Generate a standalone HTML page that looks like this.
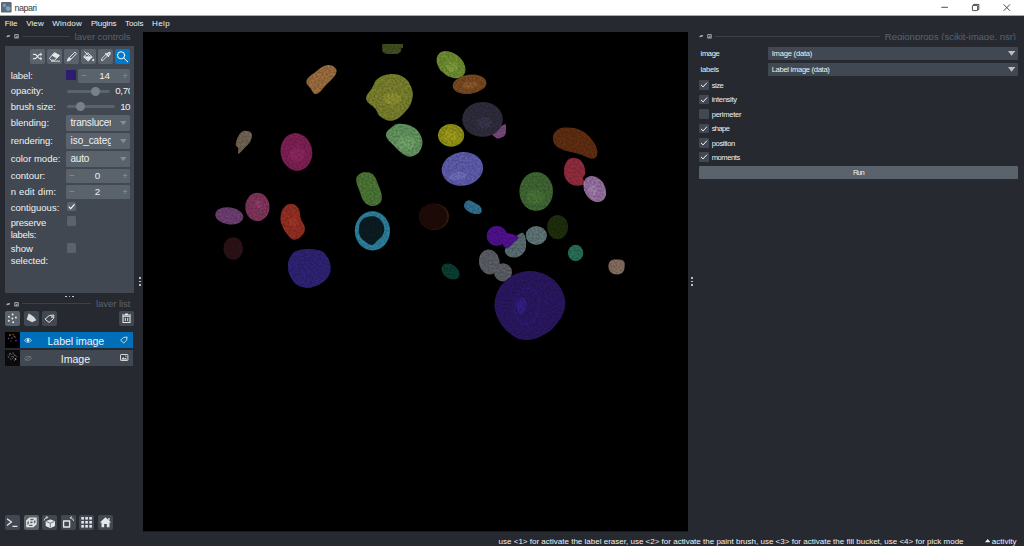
<!DOCTYPE html>
<html>
<head>
<meta charset="utf-8">
<title>napari</title>
<style>
html,body{margin:0;padding:0;}
body{width:1024px;height:546px;overflow:hidden;background:#262930;font-family:"Liberation Sans",sans-serif;color:#f0f1f2;}
#app{position:relative;width:1024px;height:546px;overflow:hidden;background:#262930;}
#app div,#app span,#app svg{position:absolute;}
.t{white-space:pre;line-height:12px;color:#f0f1f2;}
.box{background:#414851;}
.btn{background:#414851;border-radius:2px;}
.fld{background:#5a626c;border-radius:1.5px;}
.clip{overflow:hidden;}
</style>
</head>
<body>
<div id="app">
<div class="box" style="left:0px;top:0px;width:1024px;height:15px;background:#ffffff;"></div>
<div class="box" style="left:0px;top:15px;width:1024px;height:1px;background:#a9aaad;"></div>
<svg style="left:1px;top:2px" width="11" height="11" viewBox="0 0 11 11"><rect width="10.600" height="10.600" rx="1.2" fill="#5d6975"/><circle cx="3.400" cy="3.400" r="1.800" fill="#6c9cc0"/><circle cx="7" cy="6.600" r="2.400" fill="#7aa6c4"/><circle cx="4.200" cy="7.600" r="1.300" fill="#54788c"/><circle cx="8" cy="2.600" r="1" fill="#8a5a8a"/><circle cx="2" cy="6" r="0.600" fill="#a0508c"/><circle cx="8.800" cy="8.800" r="0.600" fill="#5aa04a"/></svg>
<span class="t" style="left:14.50px;top:1.98px;font-size:9px;letter-spacing:-0.522px;color:#3c3c3c;">napari</span>
<svg style="left:936px;top:0px" width="88" height="15" viewBox="0 0 88 15" fill="none" stroke="#222" stroke-width="0.8"><path d="M5.3 7.3h6.6"/><rect x="36.4" y="5.4" width="5.2" height="5.2" rx="0.6"/><path d="M37.6 5.4v-1h5.2v5.2h-1.2"/><path d="M67.6 4.4l6.4 6.4M74 4.4l-6.4 6.4"/></svg>
<span class="t" style="left:4.70px;top:18.03px;font-size:8px;letter-spacing:-0.023px;">File</span>
<span class="t" style="left:26.25px;top:18.03px;font-size:8px;letter-spacing:0.074px;">View</span>
<span class="t" style="left:52.30px;top:18.03px;font-size:8px;letter-spacing:0.208px;">Window</span>
<span class="t" style="left:90.90px;top:18.03px;font-size:8px;letter-spacing:-0.107px;">Plugins</span>
<span class="t" style="left:125.00px;top:18.03px;font-size:8px;letter-spacing:-0.058px;">Tools</span>
<span class="t" style="left:152.00px;top:18.03px;font-size:8px;letter-spacing:0.387px;">Help</span>
<div class="box" style="left:143px;top:32px;width:545px;height:499px;background:#000000;"></div>
<div class="box" style="left:143px;top:531px;width:545px;height:1px;background:#17191d;"></div>
<svg style="left:143px;top:32px" width="545" height="500" viewBox="143 32 545 500"><defs><filter id="tx" x="0" y="0" width="100%" height="100%" color-interpolation-filters="sRGB"><feTurbulence type="fractalNoise" baseFrequency="0.5" numOctaves="2" seed="7"/><feColorMatrix type="matrix" values="3 0 0 0 -1  3 0 0 0 -1  3 0 0 0 -1  0 0 0 0 1" result="ng"/><feComposite in="SourceGraphic" in2="ng" operator="arithmetic" k1="0.22" k2="0.86" k3="0" k4="0"/></filter></defs><g filter="url(#tx)"><path d="M382.2 44H403V47.6C403 48.2 401.2 48 401.2 49V50.8C401.2 52 398.500 53.900 396.800 53.900H387C385 53.900 382.200 52 382.200 50.500Z" fill="#3d4b1e"/><path d="M306.6 80.5C307.7 77.0 311.9 74.7 316.0 71.5C320.1 68.3 322.6 66.0 326.5 65.2C330.4 64.4 332.9 65.5 334.8 67.4C336.7 69.3 337.4 70.9 335.6 74.5C333.8 78.1 329.9 81.0 326.0 85.0C322.1 89.0 319.8 93.3 316.6 94.0C313.4 94.7 312.6 91.3 310.5 88.5C308.4 85.7 305.5 84.0 306.6 80.5Z" fill="#94683c"/><path d="M366.2 99.0C365.6 94.8 369.6 92.2 372.0 88.0C374.4 83.8 374.1 81.4 378.0 78.5C381.9 75.6 385.6 74.2 391.0 74.0C396.4 73.8 399.8 74.6 404.0 77.5C408.2 80.4 409.8 83.3 411.5 88.0C413.2 92.7 413.3 95.0 412.0 100.0C410.7 105.0 408.9 107.8 405.0 112.0C401.1 116.2 398.0 119.5 393.0 120.5C388.0 121.5 384.7 119.5 381.0 117.0C377.3 114.5 378.1 112.2 375.0 108.5C371.9 104.8 366.8 103.2 366.2 99.0Z" fill="#747a2a"/><ellipse cx="392" cy="99" rx="9" ry="6" fill="#878a2e"/><ellipse cx="451" cy="64.7" rx="16.3" ry="11.3" fill="#69872f" transform="rotate(40 451 64.7)"/><ellipse cx="452" cy="67" rx="6" ry="5" fill="#7a9636"/><ellipse cx="469.6" cy="84.3" rx="17" ry="9.6" fill="#72451f" transform="rotate(-8 469.6 84.3)"/><ellipse cx="470" cy="85" rx="8" ry="3.5" fill="#855328" transform="rotate(-8 470 85)"/><path d="M498.1 138.7C496.8 138.6 491.7 135.5 492.4 134.0C493.1 132.5 503.9 123.8 505.2 123.9C506.5 124.0 506.1 133.3 505.4 134.8C504.7 136.3 499.4 138.8 498.1 138.7Z" fill="#724678"/><ellipse cx="482.5" cy="119.4" rx="20.3" ry="17.4" fill="#2c2a39"/><ellipse cx="484" cy="123" rx="8" ry="6" fill="#323146"/><ellipse cx="451.1" cy="135.3" rx="13.1" ry="11.4" fill="#8b8b16"/><ellipse cx="451" cy="135.5" rx="7" ry="6" fill="#97951a"/><ellipse cx="462.4" cy="168.9" rx="20.8" ry="16.8" fill="#5b58a5" transform="rotate(-8 462.4 168.9)"/><ellipse cx="458" cy="176" rx="9" ry="4" fill="#6967af" transform="rotate(-8 458 176)"/><path d="M553.1 140.3C552.4 136.6 553.4 133.1 556.5 130.5C559.6 127.9 562.7 127.5 568.0 127.6C573.3 127.7 576.9 128.3 582.0 131.0C587.1 133.7 589.3 136.3 592.5 140.5C595.7 144.7 597.2 147.8 597.3 151.5C597.4 155.2 597.0 158.0 593.0 158.5C589.0 159.0 584.8 155.9 578.0 153.8C571.2 151.7 565.1 151.3 560.0 148.5C554.9 145.7 553.8 144.0 553.1 140.3Z" fill="#5b2b10"/><path d="M564.0 171.0C564.1 167.1 564.8 163.7 567.0 161.0C569.2 158.3 571.4 157.7 574.5 157.9C577.6 158.1 579.8 159.1 582.0 162.0C584.2 164.9 585.1 168.5 585.3 172.0C585.5 175.5 582.6 176.7 583.0 179.0C583.4 181.3 587.6 181.7 587.0 183.0C586.4 184.3 582.9 185.0 580.0 185.4C577.1 185.8 575.8 186.1 573.0 185.0C570.2 183.9 568.4 182.9 566.5 180.0C564.6 177.1 563.9 174.9 564.0 171.0Z" fill="#8b2a3a"/><ellipse cx="594.8" cy="189" rx="10.3" ry="14" fill="#8f6b99" transform="rotate(-32 594.8 189)"/><ellipse cx="593" cy="190" rx="4" ry="5" fill="#9b79a5" transform="rotate(-32 593 190)"/><ellipse cx="536.2" cy="191.5" rx="16.8" ry="19.5" fill="#3c6130"/><ellipse cx="535" cy="197" rx="9" ry="7" fill="#456d34"/><path d="M386.1 135.8C385.5 131.8 388.7 129.7 391.6 127.2C394.5 124.7 395.7 123.7 400.2 123.7C404.7 123.7 409.1 124.5 413.4 127.2C417.7 129.9 419.5 132.4 421.2 136.6C422.9 140.8 422.9 143.6 421.6 147.5C420.3 151.4 418.3 153.6 415.0 155.3C411.7 157.0 409.8 157.3 405.6 155.5C401.4 153.7 398.7 150.6 394.7 146.5C390.7 142.4 386.7 139.8 386.1 135.8Z" fill="#5e8e5a"/><ellipse cx="406" cy="143" rx="9" ry="7" fill="#6a9a64"/><path d="M241.5 132.0C244.6 129.7 248.9 130.7 250.8 132.5C252.7 134.3 252.1 137.3 250.8 140.5C249.5 143.7 247.0 145.3 244.5 148.0C242.0 150.7 239.8 153.7 238.5 153.7C237.2 153.7 238.8 150.1 238.2 148.0C237.6 145.9 235.1 146.7 235.8 143.4C236.5 140.1 238.4 134.3 241.5 132.0Z" fill="#6d5f50"/><ellipse cx="296.4" cy="151.9" rx="15.8" ry="18.9" fill="#791e50" transform="rotate(-10 296.4 151.9)"/><ellipse cx="297" cy="155" rx="8" ry="7" fill="#852459" transform="rotate(-10 297 155)"/><path d="M356.2 180.3C356.1 176.9 357.1 176.2 359.0 174.5C360.9 172.8 362.4 172.2 365.3 172.2C368.2 172.2 370.4 172.1 373.0 174.5C375.6 176.9 376.2 179.6 378.0 184.0C379.8 188.4 381.5 192.0 381.8 196.0C382.1 200.0 381.6 201.5 379.5 203.5C377.4 205.5 374.8 206.3 371.6 205.9C368.4 205.5 366.5 204.6 364.0 201.5C361.5 198.4 361.1 195.4 359.5 191.0C357.9 186.6 356.3 183.7 356.2 180.3Z" fill="#487132"/><ellipse cx="229.3" cy="215.9" rx="14.1" ry="8.5" fill="#693c6d" transform="rotate(8 229.3 215.9)"/><ellipse cx="257.4" cy="207" rx="12.1" ry="14.2" fill="#793257"/><ellipse cx="259" cy="204" rx="4" ry="4" fill="#893863"/><path d="M280.5 217.5C280.8 214.0 281.2 210.8 283.5 208.0C285.8 205.2 288.3 203.7 291.4 203.8C294.5 203.9 296.5 205.4 298.5 208.5C300.5 211.6 299.7 215.1 301.0 219.0C302.3 222.9 304.5 224.2 304.8 227.5C305.1 230.8 304.7 232.5 302.5 235.0C300.3 237.5 297.3 240.0 294.0 239.7C290.7 239.4 289.0 236.5 286.5 233.5C284.0 230.5 283.2 228.3 282.0 225.0C280.8 221.7 280.2 221.0 280.5 217.5Z" fill="#8d2c20"/><ellipse cx="293" cy="222" rx="4.5" ry="4.5" fill="#9b3328"/><ellipse cx="233.2" cy="248.5" rx="9.8" ry="11.2" fill="#2a1116"/><path d="M288.0 268.0C287.7 263.2 288.2 260.2 290.5 256.5C292.8 252.8 293.3 251.5 299.0 250.2C304.7 248.9 312.2 248.7 318.0 250.0C323.8 251.3 324.4 252.7 327.0 256.5C329.6 260.3 330.8 263.7 330.6 268.5C330.4 273.3 329.6 275.7 326.0 279.5C322.4 283.3 318.3 285.6 313.0 287.0C307.7 288.4 304.8 288.1 300.5 286.5C296.2 284.9 294.6 283.3 292.0 279.5C289.4 275.7 288.3 272.8 288.0 268.0Z" fill="#2b216f"/><ellipse cx="372.4" cy="230.8" rx="17.6" ry="19.6" fill="#2a7b97"/><path d="M358.9 229.0C359.2 225.8 359.3 223.1 361.5 220.5C363.7 217.9 366.1 217.1 369.5 216.6C372.9 216.1 375.0 216.1 378.0 218.0C381.0 219.9 382.9 222.6 383.9 226.0C384.9 229.4 384.3 231.5 383.0 234.5C381.7 237.5 379.8 238.4 377.5 240.5C375.2 242.6 374.4 244.8 371.7 244.9C369.0 245.0 366.9 242.8 364.5 241.0C362.1 239.2 361.2 238.5 360.0 236.0C358.8 233.5 358.6 232.2 358.9 229.0Z" fill="#0a1b20"/><ellipse cx="434" cy="216.7" rx="15" ry="13.3" fill="#3a1a0c"/><ellipse cx="433.2" cy="216.7" rx="14" ry="12.9" fill="#1c0a07"/><path d="M464.2 204.5C464.6 202.6 466.0 200.8 468.0 200.4C470.0 200.0 471.4 201.1 474.0 202.5C476.6 203.9 479.2 204.8 480.6 207.0C482.0 209.2 482.4 211.7 480.8 213.0C479.2 214.3 476.1 214.1 473.0 213.4C469.9 212.7 467.8 211.3 466.0 209.5C464.2 207.7 463.8 206.4 464.2 204.5Z" fill="#2e6b89"/><path d="M504.8 250.5C505.1 248.4 507.1 245.4 509.0 243.0C510.9 240.6 514.2 237.7 516.5 236.0C518.8 234.3 521.5 232.3 523.0 233.0C524.5 233.7 525.4 237.2 525.8 240.0C526.2 242.8 526.5 246.8 525.5 249.5C524.5 252.2 522.1 254.7 520.0 256.0C517.9 257.3 515.1 257.6 513.0 257.5C510.9 257.4 508.9 256.7 507.5 255.5C506.1 254.3 504.6 252.6 504.8 250.5Z" fill="#56686b"/><ellipse cx="496.9" cy="235.9" rx="10.3" ry="10.1" fill="#4b1086"/><path d="M502.3 233.6C503.0 232.0 506.4 233.1 508.0 233.2C509.6 233.3 512.5 234.1 514.0 234.7C515.5 235.3 519.1 236.4 519.0 237.5C518.9 238.6 515.0 241.6 513.5 243.0C512.0 244.4 509.2 248.0 507.8 248.3C506.4 248.6 503.8 247.2 503.1 245.2C502.4 243.2 501.6 235.2 502.3 233.6Z" fill="#4e108c"/><ellipse cx="536.3" cy="235.4" rx="10.6" ry="9.5" fill="#5b6f71"/><ellipse cx="557.6" cy="227.1" rx="10.5" ry="12.1" fill="#1d2b0c"/><ellipse cx="575.6" cy="253" rx="7.7" ry="8.3" fill="#276953"/><path d="M608.5 267.0C608.4 264.6 608.7 262.5 610.5 261.0C612.3 259.5 614.3 259.6 617.0 259.6C619.7 259.6 621.9 259.5 623.5 261.0C625.1 262.5 624.8 264.6 624.6 267.0C624.4 269.4 624.1 271.0 622.5 272.5C620.9 274.0 619.4 274.4 617.0 274.4C614.6 274.4 612.8 274.0 611.0 272.5C609.2 271.0 608.6 269.4 608.5 267.0Z" fill="#7f695b"/><ellipse cx="489.3" cy="262" rx="10.4" ry="12.5" fill="#565a60" transform="rotate(-12 489.3 262)"/><ellipse cx="503" cy="272.3" rx="9" ry="9.1" fill="#575b61"/><ellipse cx="450.5" cy="271.5" rx="10" ry="7" fill="#0a3a30" transform="rotate(35 450.5 271.5)"/><path d="M565.3 306.1C565.0 309.0 563.7 312.0 562.5 314.7C561.4 317.4 559.9 319.9 558.2 322.1C556.6 324.4 554.7 326.5 552.7 328.4C550.7 330.3 548.5 332.0 546.1 333.5C543.7 335.0 541.2 336.3 538.5 337.4C535.8 338.4 532.9 339.4 530.0 339.7C527.1 340.1 523.8 340.3 520.9 339.6C518.0 338.9 515.2 337.2 512.7 335.5C510.2 333.9 507.9 332.0 505.8 329.9C503.8 327.8 501.9 325.5 500.3 323.0C498.8 320.5 497.4 317.8 496.4 314.9C495.5 312.1 494.6 309.1 494.4 306.1C494.3 303.1 494.8 299.9 495.5 297.0C496.3 294.1 497.6 291.2 499.1 288.5C500.6 285.9 502.6 283.4 504.8 281.3C506.9 279.1 509.5 277.2 512.2 275.7C514.8 274.2 517.8 273.0 520.8 272.2C523.7 271.4 526.9 271.0 530.0 271.0C533.1 271.0 536.3 271.4 539.2 272.2C542.2 273.0 545.2 274.2 547.8 275.7C550.5 277.2 553.1 279.1 555.2 281.3C557.4 283.4 559.4 285.9 560.9 288.5C562.4 291.2 563.7 294.1 564.5 297.0C565.2 299.9 565.6 303.2 565.3 306.1Z" fill="#27165c"/><ellipse cx="527" cy="306" rx="12" ry="18" fill="none" transform="rotate(8 527 306)" stroke="#2b1868" stroke-width="2.6"/><ellipse cx="529" cy="306" rx="17" ry="24" fill="none" transform="rotate(8 529 306)" stroke="#291764" stroke-width="2" stroke-dasharray="40 60"/><ellipse cx="521.6" cy="305.8" rx="5.2" ry="8.4" fill="#2f1c7a" transform="rotate(8 521.6 305.8)"/></g></svg>
<svg style="left:6px;top:33px" width="14" height="6" viewBox="0 0 14 6"><path d="M0.2 4.300l1-1.700 3.100-.500-1 1.700z" fill="#b4b7bb"/><rect x="8.800" y="1.700" width="3.400" height="3.300" fill="#2c3038" stroke="#c4c6c9" stroke-width="0.8"/><path d="M11.200 2.400v2h-1.800z" fill="#c4c6c9"/></svg>
<div class="box" style="left:22px;top:36px;width:48px;height:1px;background:#3b4049;"></div>
<div class="clip" style="left:70px;top:28px;width:66px;height:12.2px">
<span class="t" style="left:4.60px;top:3.07px;font-size:9.6px;letter-spacing:-0.076px;color:#5a626c;">layer controls</span>
</div>
<div class="box" style="left:5px;top:46px;width:129px;height:247px;background:#414851;"></div>
<div class="btn" style="left:30px;top:49px;width:15px;height:15px;background:#5a626c;"></div>
<div class="btn" style="left:47px;top:49px;width:15px;height:15px;background:#5a626c;"></div>
<div class="btn" style="left:64px;top:49px;width:15px;height:15px;background:#5a626c;"></div>
<div class="btn" style="left:81px;top:49px;width:15px;height:15px;background:#5a626c;"></div>
<div class="btn" style="left:98px;top:49px;width:15px;height:15px;background:#5a626c;"></div>
<div class="btn" style="left:115px;top:49px;width:15px;height:15px;background:#007acc;"></div>
<svg style="left:30px;top:49px" width="15" height="15" viewBox="0 0 15 15" stroke="#e6e7e8" fill="none" stroke-width="1.1" stroke-linecap="round" stroke-linejoin="round"><path d="M3.4 5.4h1.6c2 0 3 4.2 5 4.2h1.4M3.4 9.6h1.6c.8 0 1.4-.7 1.9-1.5M8.1 6.9c.5-.8 1.100-1.500 1.900-1.500h1.400"/><path d="M10.6 4.200l1.300 1.200-1.300 1.200M10.600 8.400l1.300 1.200-1.300 1.200" stroke-width="0.9"/></svg>
<svg style="left:47px;top:49px" width="15" height="15" viewBox="0 0 15 15" stroke="#e6e7e8" fill="none" stroke-width="1.1" stroke-linecap="round" stroke-linejoin="round"><path d="M2.600 8.900l5.200-5 4.600 2.700-4.900 4.600h-3z" stroke-width="1"/><path d="M7.800 3.900l4.600 2.700-2.700 2.500-4.500-2.700z" fill="#e6e7e8" stroke-width="0.8"/><path d="M4.400 12.200h8.300" stroke-width="0.9"/></svg>
<svg style="left:64px;top:49px" width="15" height="15" viewBox="0 0 15 15" stroke="#e6e7e8" fill="none" stroke-width="1.1" stroke-linecap="round" stroke-linejoin="round"><path d="M5.600 8.400l5.300-5.300 1.600 1.600-5.300 5.300z" stroke-width="1"/><path d="M5.200 8.600l1.800 1.800-1.300 1.200-2.500.6.700-2.400z" fill="#e6e7e8" stroke-width="0.6"/></svg>
<svg style="left:81px;top:49px" width="15" height="15" viewBox="0 0 15 15" stroke="#e6e7e8" fill="none" stroke-width="1.1" stroke-linecap="round" stroke-linejoin="round"><path d="M2.900 7.600l4-3.800 4.300 4.100-3.700 3.900z" stroke-width="1"/><path d="M3.400 7.800h7.400l-3.300 3.500z" fill="#e6e7e8" stroke-width="0.8"/><path d="M3.800 2.800l4.300 4.100" stroke-width="1"/><path d="M12.200 9.200c.6.900 1 1.500 1 2a1 1 0 0 1-2 0c0-.5.400-1.100 1-2z" fill="#e6e7e8" stroke="none"/></svg>
<svg style="left:98px;top:49px" width="15" height="15" viewBox="0 0 15 15" stroke="#e6e7e8" fill="none" stroke-width="1.1" stroke-linecap="round" stroke-linejoin="round"><path d="M8.200 5.500l1.300 1.300-4.300 4.300-1.700.4.400-1.700z" stroke-width="0.9"/><path d="M7.800 4.500l2.700 2.700M9 5.400l1.600-1.600a.9.900 0 0 1 1.300 1.300l-1.600 1.600" stroke-width="1.3"/></svg>
<svg style="left:115px;top:49px" width="15" height="15" viewBox="0 0 15 15" stroke="#ffffff" fill="none" stroke-width="1" stroke-linecap="round"><circle cx="6.100" cy="6.300" r="3.600"/><path d="M8.800 9l3.900 3.800"/></svg>
<span class="t" style="left:10.70px;top:70.31px;font-size:9.5px;letter-spacing:-0.120px;">label:</span>
<div class="box" style="left:66px;top:70.3px;width:10px;height:10.2px;background:#2e1c6e;"></div>
<div class="fld" style="left:78px;top:69px;width:52px;height:14px;background:#5a626c;"></div>
<span class="t" style="left:81.20px;top:70.11px;font-size:9.5px;color:#8a9199;">−</span>
<span class="t" style="left:122.30px;top:70.31px;font-size:9.5px;color:#8a9199;">+</span>
<span class="t" style="left:99.20px;top:70.30px;font-size:9.8px;letter-spacing:-0.253px;">14</span>
<span class="t" style="left:10.70px;top:85.31px;font-size:9.5px;letter-spacing:-0.019px;">opacity:</span>
<div class="fld" style="left:66.6px;top:90px;width:43.4px;height:3px;background:#5a626c;"></div>
<div class="fld" style="left:90.9px;top:86.5px;width:9px;height:9px;background:#78808b;border-radius:50%;"></div>
<div class="clip" style="left:112px;top:84px;width:18px;height:14px">
<span class="t" style="left:3.20px;top:1.30px;font-size:9.8px;letter-spacing:-0.320px;">0,70</span>
</div>
<span class="t" style="left:10.70px;top:100.51px;font-size:9.5px;letter-spacing:-0.094px;">brush size:</span>
<div class="fld" style="left:66.6px;top:105px;width:48.2px;height:3px;background:#5a626c;"></div>
<div class="fld" style="left:75.5px;top:101.6px;width:9px;height:9px;background:#78808b;border-radius:50%;"></div>
<span class="t" style="left:120.20px;top:100.50px;font-size:9.8px;letter-spacing:-0.653px;">10</span>
<span class="t" style="left:10.70px;top:117.01px;font-size:9.5px;letter-spacing:-0.029px;">blending:</span>
<div class="fld" style="left:66px;top:115px;width:64px;height:16px;background:#5a626c;"></div>
<div class="clip" style="left:66px;top:115px;width:45px;height:16px">
<span class="t" style="left:4.50px;top:1.83px;font-size:10px;letter-spacing:-0.220px;">translucent</span>
</div>
<svg style="left:119.6px;top:120.5px" width="6.600" height="4.400" viewBox="0 0 6.600 4.400"><path d="M0 0h6.600l-3.300 4.300z" fill="#858c95"/></svg>
<span class="t" style="left:10.70px;top:135.11px;font-size:9.5px;letter-spacing:-0.058px;">rendering:</span>
<div class="fld" style="left:66px;top:133px;width:64px;height:16px;background:#5a626c;"></div>
<div class="clip" style="left:66px;top:133px;width:44.5px;height:16px">
<span class="t" style="left:4.50px;top:1.94px;font-size:10px;letter-spacing:-0.048px;">iso_categorical</span>
</div>
<svg style="left:119.6px;top:138.5px" width="6.600" height="4.400" viewBox="0 0 6.600 4.400"><path d="M0 0h6.600l-3.300 4.300z" fill="#858c95"/></svg>
<span class="t" style="left:10.70px;top:153.01px;font-size:9.5px;letter-spacing:0.005px;">color mode:</span>
<div class="fld" style="left:66px;top:151px;width:64px;height:16px;background:#5a626c;"></div>
<div class="clip" style="left:66px;top:151px;width:45px;height:16px">
<span class="t" style="left:4.50px;top:1.84px;font-size:10px;letter-spacing:-0.242px;">auto</span>
</div>
<svg style="left:119.6px;top:156.5px" width="6.600" height="4.400" viewBox="0 0 6.600 4.400"><path d="M0 0h6.600l-3.300 4.300z" fill="#858c95"/></svg>
<span class="t" style="left:10.70px;top:170.31px;font-size:9.5px;letter-spacing:0.034px;">contour:</span>
<div class="fld" style="left:66px;top:169px;width:64px;height:14px;background:#5a626c;"></div>
<span class="t" style="left:69.00px;top:170.11px;font-size:9.5px;color:#8d949c;">−</span>
<span class="t" style="left:122.20px;top:170.31px;font-size:9.5px;color:#8d949c;">+</span>
<span class="t" style="left:94.70px;top:170.30px;font-size:9.8px;letter-spacing:-0.253px;">0</span>
<span class="t" style="left:10.70px;top:186.41px;font-size:9.5px;letter-spacing:0.161px;">n edit dim:</span>
<div class="fld" style="left:66px;top:185px;width:64px;height:14px;background:#5a626c;"></div>
<span class="t" style="left:69.00px;top:186.21px;font-size:9.5px;color:#8d949c;">−</span>
<span class="t" style="left:122.20px;top:186.41px;font-size:9.5px;color:#8d949c;">+</span>
<span class="t" style="left:94.70px;top:186.40px;font-size:9.8px;letter-spacing:-0.253px;">2</span>
<span class="t" style="left:10.70px;top:201.51px;font-size:9.5px;letter-spacing:0.001px;">contiguous:</span>
<div class="fld" style="left:67px;top:202px;width:9.2px;height:9.2px;background:#5a626c;"></div>
<svg style="left:67px;top:202px" width="9.2" height="9.2" viewBox="0 0 9.2 9.2"><path d="M2 4.900l1.700 1.700 3.600-4" fill="none" stroke="#fff" stroke-width="1.100" stroke-linecap="round"/></svg>
<span class="t" style="left:10.70px;top:217.31px;font-size:9.5px;letter-spacing:-0.209px;">preserve</span>
<span class="t" style="left:10.70px;top:229.01px;font-size:9.5px;letter-spacing:-0.281px;">labels:</span>
<div class="fld" style="left:67px;top:216.4px;width:9.2px;height:9.2px;background:#5a626c;"></div>
<span class="t" style="left:10.70px;top:243.41px;font-size:9.5px;letter-spacing:0.028px;">show</span>
<span class="t" style="left:10.70px;top:254.61px;font-size:9.5px;letter-spacing:-0.059px;">selected:</span>
<div class="fld" style="left:67px;top:243px;width:9.2px;height:9.6px;background:#5a626c;"></div>
<div class="box" style="left:64.8px;top:295.5px;width:1.8px;height:1.8px;background:#e4e5e6;border-radius:50%;"></div>
<div class="box" style="left:68.5px;top:295.5px;width:1.8px;height:1.8px;background:#e4e5e6;border-radius:50%;"></div>
<div class="box" style="left:72.19999999999999px;top:295.5px;width:1.8px;height:1.8px;background:#e4e5e6;border-radius:50%;"></div>
<div class="box" style="left:138.9px;top:277.45px;width:2.1px;height:1.7px;background:#dcdddf;border-radius:40%;"></div>
<div class="box" style="left:690.9px;top:277.45px;width:2.1px;height:1.7px;background:#dcdddf;border-radius:40%;"></div>
<div class="box" style="left:138.9px;top:280.65px;width:2.1px;height:1.7px;background:#dcdddf;border-radius:40%;"></div>
<div class="box" style="left:690.9px;top:280.65px;width:2.1px;height:1.7px;background:#dcdddf;border-radius:40%;"></div>
<div class="box" style="left:138.9px;top:283.84999999999997px;width:2.1px;height:1.7px;background:#dcdddf;border-radius:40%;"></div>
<div class="box" style="left:690.9px;top:283.84999999999997px;width:2.1px;height:1.7px;background:#dcdddf;border-radius:40%;"></div>
<svg style="left:6px;top:300.5px" width="14" height="6" viewBox="0 0 14 6"><path d="M0.2 4.300l1-1.700 3.100-.500-1 1.700z" fill="#b4b7bb"/><rect x="8.800" y="1.700" width="3.400" height="3.300" fill="#2c3038" stroke="#c4c6c9" stroke-width="0.8"/><path d="M11.200 2.400v2h-1.800z" fill="#c4c6c9"/></svg>
<div class="box" style="left:22px;top:303px;width:69px;height:1px;background:#3b4049;"></div>
<div class="clip" style="left:92px;top:296px;width:44px;height:11px">
<span class="t" style="left:3.90px;top:1.97px;font-size:9.6px;letter-spacing:-0.079px;color:#5a626c;">layer list</span>
</div>
<div class="btn" style="left:5px;top:311px;width:15px;height:15px;background:#5a626c;"></div>
<div class="btn" style="left:23.5px;top:311px;width:15px;height:15px;background:#414851;"></div>
<div class="btn" style="left:42px;top:311px;width:15px;height:15px;background:#414851;"></div>
<div class="btn" style="left:119px;top:311px;width:15px;height:15px;background:#414851;"></div>
<svg style="left:5px;top:311px" width="15" height="15" viewBox="0 0 15 15" fill="#e6e7e8"><circle cx="7.600" cy="3.600" r="1"/><circle cx="4" cy="5.800" r="1"/><circle cx="10.900" cy="6.400" r="1"/><circle cx="7.400" cy="7.600" r="1"/><circle cx="3.800" cy="9.700" r="1"/><circle cx="8.200" cy="11.300" r="1"/></svg>
<svg style="left:23.5px;top:311px" width="15" height="15" viewBox="0 0 15 15"><path d="M4.500 2.600c3.400 1.400 6.200 3.700 7.800 6.700l-4.100 1.900-5.500-2.600z" fill="#d7d8da"/></svg>
<svg style="left:42px;top:311px" width="15" height="15" viewBox="0 0 15 15" fill="none" stroke="#e6e7e8" stroke-width="1" stroke-linejoin="round"><path d="M3 8.200l4.300-3.700 4.600-.5-.3 3.500-4.500 3.900z"/><circle cx="10" cy="6" r="0.500" fill="#e6e7e8"/></svg>
<svg style="left:119px;top:311px" width="15" height="15" viewBox="0 0 15 15" fill="none" stroke="#e6e7e8" stroke-width="1.100"><path d="M4 5.200h7v6.300h-7z"/><path d="M3 4h9M6 3h3" stroke-width="1.200"/><path d="M6.300 6.800v3.200M8.700 6.800v3.200" stroke-width="1"/></svg>
<div class="box" style="left:5px;top:332px;width:14.6px;height:16px;background:#000;"></div>
<div class="box" style="left:20px;top:332px;width:113px;height:16px;background:#006fba;"></div>
<div class="box" style="left:5px;top:350px;width:14.6px;height:16px;background:#0b0b0b;"></div>
<div class="box" style="left:20px;top:350px;width:113px;height:16px;background:#414851;"></div>
<svg style="left:5px;top:331.7px" width="14.6" height="15.8" viewBox="0 0 14.6 15.8"><circle cx="5" cy="3" r=".8" fill="#c8b020"/><circle cx="8" cy="2.500" r=".7" fill="#c05a30"/><circle cx="10" cy="5" r=".8" fill="#b04a90"/><circle cx="3.500" cy="6.500" r=".8" fill="#8a3a9a"/><circle cx="7" cy="6" r=".7" fill="#5a9a4a"/><circle cx="11" cy="8.500" r=".8" fill="#6a3ad0"/><circle cx="6" cy="9" r=".6" fill="#3a8ab0"/><circle cx="9" cy="4" r=".6" fill="#80a040"/></svg>
<svg style="left:5px;top:349.8px" width="14.6" height="15.8" viewBox="0 0 14.6 15.8" fill="#6a6a6a"><circle cx="5" cy="3.500" r=".8"/><circle cx="8" cy="3" r=".7"/><circle cx="10" cy="5.500" r=".8"/><circle cx="3.500" cy="7" r=".7"/><circle cx="7" cy="6.500" r=".7"/><circle cx="10.500" cy="9" r=".9" fill="#9a9a9a"/><circle cx="6" cy="9.500" r=".6"/><circle cx="9" cy="4.500" r=".6"/><circle cx="4.500" cy="5" r=".5"/><circle cx="6" cy="4.500" r=".6"/><circle cx="8.500" cy="7" r=".7"/><circle cx="5" cy="8" r=".6"/><circle cx="11.500" cy="6.500" r=".5"/><circle cx="7.500" cy="8.500" r=".5"/><circle cx="3" cy="5" r=".5"/><circle cx="9.500" cy="10.500" r=".5"/></svg>
<span class="t" style="left:47.60px;top:335.23px;font-size:10.6px;letter-spacing:-0.120px;">Label image</span>
<span class="t" style="left:60.80px;top:353.13px;font-size:10.6px;letter-spacing:-0.051px;">Image</span>
<svg style="left:24px;top:336.600px" width="8" height="6.600" viewBox="0 0 9 7.500" fill="none" stroke="#f0f1f2" stroke-width="0.800"><path d="M0.500 3.800c2.200-3 5.800-3 8 0-2.200 3-5.800 3-8 0z"/><circle cx="4.500" cy="3.800" r="1.200" fill="#f0f1f2"/></svg>
<svg style="left:24px;top:354.600px" width="8" height="6.600" viewBox="0 0 9 7.500" fill="none" stroke="#7d848d" stroke-width="0.800"><path d="M0.500 3.800c2.200-3 5.800-3 8 0-2.200 3-5.800 3-8 0z"/><path d="M1 6.300l7-5"/></svg>
<svg style="left:120.3px;top:336.300px" width="8" height="7.500" viewBox="0 0 8 7.500" fill="none" stroke="#f0f1f2" stroke-width="0.800" stroke-linejoin="round"><path d="M0.600 4.300l2.700-2.700 3.800-.6-.4 3.200-2.900 2.800z"/></svg>
<svg style="left:120.300px;top:354.300px" width="8.400" height="7" viewBox="0 0 8.400 7" fill="none" stroke="#e6e7e8" stroke-width="0.900"><rect x="0.500" y="0.500" width="7.400" height="6" rx="0.600"/><path d="M1.200 5.600l2-2.300 1.500 1.500 1-1 1.600 1.800z" fill="#e6e7e8" stroke="none"/><circle cx="5.900" cy="2.200" r="0.600" fill="#e6e7e8" stroke="none"/></svg>
<div class="btn" style="left:5px;top:514.5px;width:15px;height:15px;background:#414851;"></div>
<div class="btn" style="left:23.5px;top:514.5px;width:15px;height:15px;background:#5a626c;"></div>
<div class="btn" style="left:42px;top:514.5px;width:15px;height:15px;background:#414851;"></div>
<div class="btn" style="left:60.5px;top:514.5px;width:15px;height:15px;background:#414851;"></div>
<div class="btn" style="left:79px;top:514.5px;width:15px;height:15px;background:#414851;"></div>
<div class="btn" style="left:98px;top:514.5px;width:15px;height:15px;background:#414851;"></div>
<svg style="left:5px;top:515px" width="15" height="14.500" viewBox="0 0 15 14.500" fill="none" stroke="#e6e7e8" stroke-width="1.300" stroke-linejoin="round"><path d="M2 3.800l4.500 3.300-4.500 3.300M7.400 11.300h5"/></svg>
<svg style="left:23.500px;top:515px" width="15" height="14.500" viewBox="0 0 15 14.500" fill="none" stroke="#e6e7e8" stroke-width="1.300" stroke-linejoin="round" stroke-width="1"><path d="M2.800 5.800l2.800-2.600h6.400v5.800l-2.800 2.600h-6.400z"/><path d="M2.800 5.800h6.400v5.800M9.200 5.800l2.800-2.600M5.600 3.200v5.800h6.400M5.600 9l-2.800 2.600"/></svg>
<svg style="left:42px;top:515px" width="15" height="14.500" viewBox="0 0 15 14.500" fill="none" stroke="#e6e7e8" stroke-width="1.300" stroke-linejoin="round" stroke-width="1"><path d="M4.300 6.500l4-1.500 4 1.500v4.200l-4 1.800-4-1.800z" fill="#e6e7e8"/><path d="M4.300 6.500l4 1.700 4-1.700M8.300 8.200v4.300" stroke="#414851" stroke-width="0.700"/><path d="M2.200 5.500c.2-1.800 1.400-2.900 3-3.100" stroke-width="1"/><path d="M4.400 1.300l1.500 1.100-1.300 1.300" stroke-width="0.900"/></svg>
<svg style="left:60.500px;top:515px" width="15" height="14.500" viewBox="0 0 15 14.500" fill="none" stroke="#e6e7e8" stroke-width="1.300" stroke-linejoin="round"><rect x="2.600" y="6" width="6" height="6" /><path d="M9.600 2.800c1.700.3 2.700 1.400 2.900 3" stroke-width="1"/><path d="M10.800 1.500l-1.600 1.200 1.300 1.400" stroke-width="0.900"/></svg>
<svg style="left:79px;top:515px" width="15" height="14.500" viewBox="0 0 15 14.500" fill="#e6e7e8"><rect x="2.3" y="2.0" width="2.600" height="2.600"/><rect x="2.3" y="6.0" width="2.600" height="2.600"/><rect x="2.3" y="10.0" width="2.600" height="2.600"/><rect x="6.3" y="2.0" width="2.600" height="2.600"/><rect x="6.3" y="6.0" width="2.600" height="2.600"/><rect x="6.3" y="10.0" width="2.600" height="2.600"/><rect x="10.3" y="2.0" width="2.600" height="2.600"/><rect x="10.3" y="6.0" width="2.600" height="2.600"/><rect x="10.3" y="10.0" width="2.600" height="2.600"/></svg>
<svg style="left:98px;top:515px" width="15" height="14.500" viewBox="0 0 15 14.500" fill="#e6e7e8"><path d="M7.500 2.300l5.700 5.200h-1.700v4.700h-2.700v-3.200h-2.600v3.200h-2.700v-4.700h-1.700z"/><rect x="10.300" y="3" width="1.300" height="2.500"/></svg>
<svg style="left:699px;top:33px" width="14" height="6" viewBox="0 0 14 6"><path d="M0.2 4.300l1-1.700 3.100-.500-1 1.700z" fill="#b4b7bb"/><rect x="8.800" y="1.700" width="3.400" height="3.300" fill="#2c3038" stroke="#c4c6c9" stroke-width="0.8"/><path d="M11.200 2.400v2h-1.800z" fill="#c4c6c9"/></svg>
<div class="box" style="left:714.7px;top:36px;width:165px;height:1px;background:#3b4049;"></div>
<div class="clip" style="left:880px;top:28px;width:144px;height:11.6px">
<span class="t" style="left:4.80px;top:3.27px;font-size:9.6px;letter-spacing:-0.051px;color:#5a626c;">Regionprops (scikit-image, nsr)</span>
</div>
<span class="t" style="left:700.60px;top:47.57px;font-size:7.6px;letter-spacing:-0.377px;">image</span>
<span class="t" style="left:700.60px;top:64.27px;font-size:7.6px;letter-spacing:-0.257px;">labels</span>
<div class="box" style="left:767.5px;top:47px;width:250.5px;height:12.8px;background:#414851;border-radius:1px;"></div>
<div class="box" style="left:767.5px;top:63.4px;width:250.5px;height:12.8px;background:#414851;border-radius:1px;"></div>
<span class="t" style="left:771.70px;top:47.57px;font-size:7.6px;letter-spacing:-0.214px;">Image (data)</span>
<span class="t" style="left:771.70px;top:63.87px;font-size:7.6px;letter-spacing:-0.302px;">Label image (data)</span>
<svg style="left:1007.7px;top:50.8px" width="7.200" height="4.800" viewBox="0 0 7.200 4.800"><path d="M0 0h7.200l-3.600 4.800z" fill="#bcbec1"/></svg>
<svg style="left:1007.7px;top:67.2px" width="7.200" height="4.800" viewBox="0 0 7.200 4.800"><path d="M0 0h7.200l-3.600 4.800z" fill="#bcbec1"/></svg>
<div class="box" style="left:699px;top:80.4px;width:9.8px;height:9.6px;background:#414851;border-radius:1px;"></div>
<svg style="left:699px;top:80.4px" width="9.800" height="9.600" viewBox="0 0 9.8 9.6"><path d="M2.300 5.200l1.800 1.700 3.600-4" fill="none" stroke="#fff" stroke-width="0.95" stroke-linecap="round"/></svg>
<span class="t" style="left:711.70px;top:80.07px;font-size:7.6px;letter-spacing:-0.454px;">size</span>
<div class="box" style="left:699px;top:94.80000000000001px;width:9.8px;height:9.6px;background:#414851;border-radius:1px;"></div>
<svg style="left:699px;top:94.80000000000001px" width="9.800" height="9.600" viewBox="0 0 9.8 9.6"><path d="M2.300 5.200l1.800 1.700 3.600-4" fill="none" stroke="#fff" stroke-width="0.95" stroke-linecap="round"/></svg>
<span class="t" style="left:711.70px;top:94.47px;font-size:7.6px;letter-spacing:-0.318px;">intensity</span>
<div class="box" style="left:699px;top:109.2px;width:9.8px;height:9.6px;background:#414851;border-radius:1px;"></div>
<span class="t" style="left:711.70px;top:108.87px;font-size:7.6px;letter-spacing:-0.275px;">perimeter</span>
<div class="box" style="left:699px;top:123.60000000000001px;width:9.8px;height:9.6px;background:#414851;border-radius:1px;"></div>
<svg style="left:699px;top:123.60000000000001px" width="9.800" height="9.600" viewBox="0 0 9.8 9.6"><path d="M2.300 5.200l1.800 1.700 3.600-4" fill="none" stroke="#fff" stroke-width="0.95" stroke-linecap="round"/></svg>
<span class="t" style="left:711.70px;top:123.27px;font-size:7.6px;letter-spacing:-0.621px;">shape</span>
<div class="box" style="left:699px;top:138.0px;width:9.8px;height:9.6px;background:#414851;border-radius:1px;"></div>
<svg style="left:699px;top:138.0px" width="9.800" height="9.600" viewBox="0 0 9.8 9.6"><path d="M2.300 5.200l1.800 1.700 3.600-4" fill="none" stroke="#fff" stroke-width="0.95" stroke-linecap="round"/></svg>
<span class="t" style="left:711.70px;top:137.67px;font-size:7.6px;letter-spacing:-0.373px;">position</span>
<div class="box" style="left:699px;top:152.4px;width:9.8px;height:9.6px;background:#414851;border-radius:1px;"></div>
<svg style="left:699px;top:152.4px" width="9.800" height="9.600" viewBox="0 0 9.8 9.6"><path d="M2.300 5.200l1.800 1.700 3.600-4" fill="none" stroke="#fff" stroke-width="0.95" stroke-linecap="round"/></svg>
<span class="t" style="left:711.70px;top:152.07px;font-size:7.6px;letter-spacing:-0.433px;">moments</span>
<div class="box" style="left:699px;top:166.2px;width:319px;height:12.7px;background:#5a626c;border-radius:1px;"></div>
<span class="t" style="left:852.90px;top:167.07px;font-size:7.6px;letter-spacing:-1.046px;">Run</span>
<span class="t" style="left:498.60px;top:535.83px;font-size:8px;letter-spacing:0.005px;">use &lt;1&gt; for activate the label eraser, use &lt;2&gt; for activate the paint brush, use &lt;3&gt; for activate the fill bucket, use &lt;4&gt; for pick mode</span>
<svg style="left:984.8px;top:539.400px" width="5.400" height="3.200" viewBox="0 0 5.400 3.200"><path d="M0 3.200h5.400l-2.700-3.200z" fill="#f0f1f2"/></svg>
<span class="t" style="left:991.70px;top:535.83px;font-size:8px;letter-spacing:0.068px;">activity</span>
</div>
</body>
</html>
